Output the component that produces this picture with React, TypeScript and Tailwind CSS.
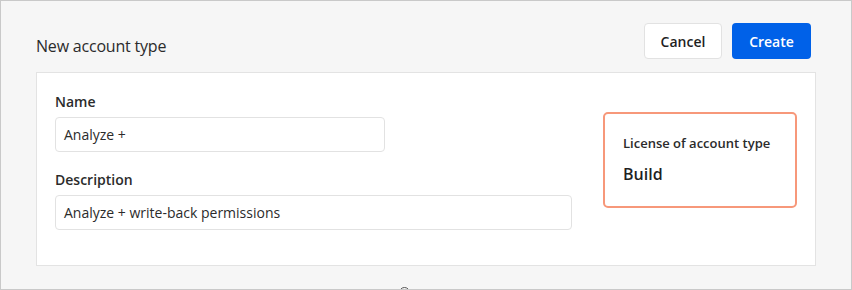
export default function App() {
  return (
    <div
      className="w-[852px] h-[290px] overflow-hidden bg-[#f6f6f6] border border-[#c9c9c9] text-[#1f1f1f]"
      style={{ fontFamily: '"Open Sans", "Noto Sans", sans-serif' }}
    >
      {/* Header */}
      <div className="flex items-center justify-between pl-[35px] pr-[40px] pt-[22px] pb-[13px]">
        <h1 className="text-[16px] font-normal text-[#2b2b2b] pt-[10px] tracking-[-0.2px]">New account type</h1>
        <div className="flex gap-[10px]">
          <button className="h-[36px] w-[78px] rounded-[4px] border border-[#e2e2e2] bg-white text-[14px] font-semibold text-[#1f1f1f]">
            Cancel
          </button>
          <button className="h-[36px] w-[79px] rounded-[4px] bg-[#0061e8] text-[14px] font-semibold text-white">
            Create
          </button>
        </div>
      </div>

      {/* Card */}
      <div className="ml-[35px] mr-[35px] h-[194px] bg-white border border-[#e3e3e3] flex justify-between pl-[18px] pr-[18px] pt-[20px]">
        <div className="flex flex-col">
          <label className="text-[14px] font-semibold text-[#2b2b2b] leading-[18px]">Name</label>
          <div className="mt-[6px] w-[330px] h-[35px] rounded-[4px] border border-[#e2e2e2] flex items-center px-[8px] text-[14px] text-[#2b2b2b]">
            Analyze +
          </div>
          <label className="mt-[19px] text-[14px] font-semibold text-[#2b2b2b] leading-[18px]">Description</label>
          <div className="mt-[6px] w-[517px] h-[35px] rounded-[4px] border border-[#e2e2e2] flex items-center px-[8px] text-[14px] text-[#2b2b2b]">
            Analyze + write-back permissions
          </div>
        </div>
        <div className="mt-[19px] w-[194px] h-[96px] rounded-[5px] border-2 border-[#f7987a] px-[18px] pt-[20px]">
          <div className="text-[13px] font-semibold text-[#2b2b2b] leading-[18px]">License of account type</div>
          <div className="mt-[12px] text-[16px] font-semibold text-[#1f1f1f] leading-[20px]">Build</div>
        </div>
      </div>

      {/* tiny handle at bottom */}
      <div className="flex mt-[21px] pl-[398px]">
        <div className="w-[11px] h-[11px] rounded-full border border-[#555]" />
      </div>
    </div>
  );
}
